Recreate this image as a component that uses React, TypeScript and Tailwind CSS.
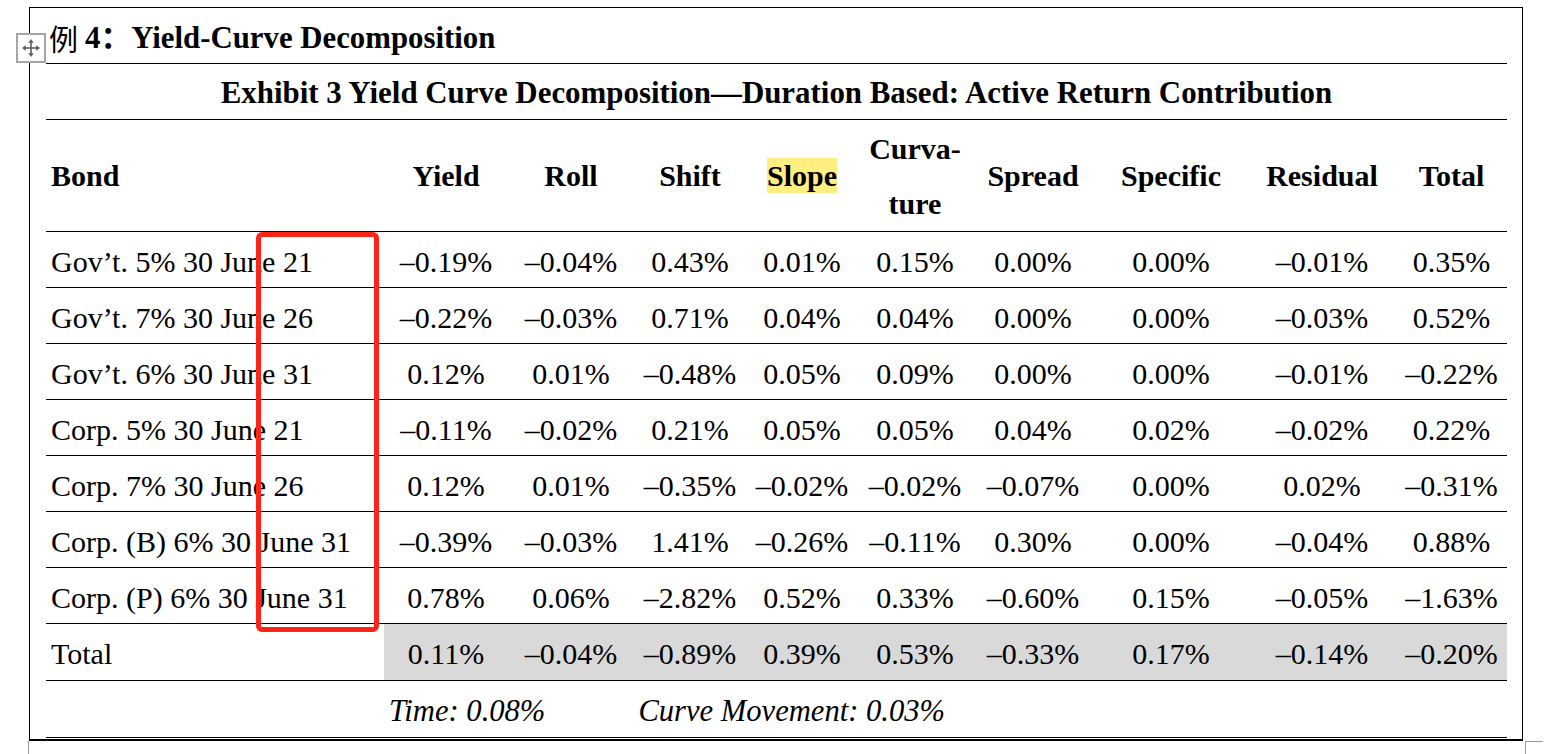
import React from 'react';

type Row = { bond: string; values: string[] };

const headers = ['Yield', 'Roll', 'Shift', 'Slope', 'Curvature', 'Spread', 'Specific', 'Residual', 'Total'];

const rows: Row[] = [
  { bond: 'Gov’t. 5% 30 June 21', values: ['–0.19%', '–0.04%', '0.43%', '0.01%', '0.15%', '0.00%', '0.00%', '–0.01%', '0.35%'] },
  { bond: 'Gov’t. 7% 30 June 26', values: ['–0.22%', '–0.03%', '0.71%', '0.04%', '0.04%', '0.00%', '0.00%', '–0.03%', '0.52%'] },
  { bond: 'Gov’t. 6% 30 June 31', values: ['0.12%', '0.01%', '–0.48%', '0.05%', '0.09%', '0.00%', '0.00%', '–0.01%', '–0.22%'] },
  { bond: 'Corp. 5% 30 June 21', values: ['–0.11%', '–0.02%', '0.21%', '0.05%', '0.05%', '0.04%', '0.02%', '–0.02%', '0.22%'] },
  { bond: 'Corp. 7% 30 June 26', values: ['0.12%', '0.01%', '–0.35%', '–0.02%', '–0.02%', '–0.07%', '0.00%', '0.02%', '–0.31%'] },
  { bond: 'Corp. (B) 6% 30 June 31', values: ['–0.39%', '–0.03%', '1.41%', '–0.26%', '–0.11%', '0.30%', '0.00%', '–0.04%', '0.88%'] },
  { bond: 'Corp. (P) 6% 30 June 31', values: ['0.78%', '0.06%', '–2.82%', '0.52%', '0.33%', '–0.60%', '0.15%', '–0.05%', '–1.63%'] },
];

const totals = ['0.11%', '–0.04%', '–0.89%', '0.39%', '0.53%', '–0.33%', '0.17%', '–0.14%', '–0.20%'];

// column widths taken from the document table
const cols = 'grid grid-cols-[338px_124px_126px_112px_112px_114px_122px_154px_148px_111px]';

function MoveHandle() {
  return (
    <div className="absolute left-[16px] top-[33px] flex h-[30px] w-[30px] items-center justify-center border-2 border-[#a6a6a6] bg-white">
      <svg width="20" height="20" viewBox="0 0 20 20" fill="#5f5f5f" stroke="#5f5f5f">
        <line x1="10" y1="3" x2="10" y2="17" strokeWidth="1.6" />
        <line x1="3" y1="10" x2="17" y2="10" strokeWidth="1.6" />
        <polygon points="10,1 7.3,4.8 12.7,4.8" stroke="none" />
        <polygon points="10,19 7.3,15.2 12.7,15.2" stroke="none" />
        <polygon points="1,10 4.8,7.3 4.8,12.7" stroke="none" />
        <polygon points="19,10 15.2,7.3 15.2,12.7" stroke="none" />
      </svg>
    </div>
  );
}

export default function App() {
  return (
    <div className="relative h-[754px] w-[1549px] overflow-hidden bg-white font-['Liberation_Serif','Noto_Sans_CJK_SC',serif] text-[30px] text-black">
      <div className="ml-[29px] mt-[7px] w-[1494px] border border-b-2 border-black pl-[16px]">
        <div className="w-[1461px]">
          {/* Title */}
          <div className="flex h-[56px] items-center border-b border-black pl-[3px] pt-[5px] leading-none">
            <span className="font-['Noto_Sans_CJK_SC',serif] text-[29px]">例</span>
            <span className="ml-[7px] text-[30.8px] font-bold">4：Yield-Curve Decomposition</span>
          </div>

          {/* Caption */}
          <div className="flex h-[56px] items-center justify-center border-b border-black pt-[4px] text-[30.9px] font-bold leading-none">
            Exhibit 3 Yield Curve Decomposition—Duration Based: Active Return Contribution
          </div>

          {/* Header */}
          <div className={`${cols} h-[112px] border-b border-black font-bold`}>
            <div className="flex items-center pl-[5px]">Bond</div>
            {headers.map((h) => (
              <div key={h} className="flex items-center justify-center">
                {h === 'Slope' ? (
                  <span className="bg-[#ffee80] leading-[35px]">Slope</span>
                ) : h === 'Curvature' ? (
                  <div className="text-center leading-[55px]">
                    <div>Curva-</div>
                    <div>ture</div>
                  </div>
                ) : (
                  h
                )}
              </div>
            ))}
          </div>

          {/* Data rows */}
          {rows.map((r) => (
            <div key={r.bond} className={`${cols} h-[56px] border-b border-black`}>
              <div className="flex items-center whitespace-nowrap pl-[5px] pt-[3px]">{r.bond}</div>
              {r.values.map((v, i) => (
                <div key={i} className="flex items-center justify-center whitespace-nowrap pt-[3px]">
                  {v}
                </div>
              ))}
            </div>
          ))}

          {/* Total row */}
          <div className={`${cols} h-[57px] border-b border-black`}>
            <div className="flex items-center pl-[5px] pt-[3px]">Total</div>
            {totals.map((v, i) => (
              <div key={i} className="flex items-center justify-center whitespace-nowrap bg-[#d9d9d9] pt-[3px]">
                {v}
              </div>
            ))}
          </div>

          {/* Footnote row */}
          <div className="flex h-[57px] items-center border-b border-black pl-[343px] pt-[5px] text-[30.6px] italic">
            <span>Time: 0.08%</span>
            <span className="ml-[93px]">Curve Movement: 0.03%</span>
          </div>
          <div className="h-[1px]" />
        </div>
      </div>

      <MoveHandle />

      {/* red annotation box */}
      <div className="absolute left-[256px] top-[232px] h-[400px] w-[123px] rounded-[6px] border-[5px] border-[#ff2418]" />

      {/* page corner marks */}
      <div className="absolute left-[28px] top-[741px] h-[13px] w-[1px] bg-[#9a9a9a]" />
      <div className="absolute left-[1525px] top-[741px] h-[13px] w-[1px] bg-[#9a9a9a]" />
      <div className="absolute left-[1525px] top-[741px] h-[1px] w-[18px] bg-[#9a9a9a]" />
    </div>
  );
}
